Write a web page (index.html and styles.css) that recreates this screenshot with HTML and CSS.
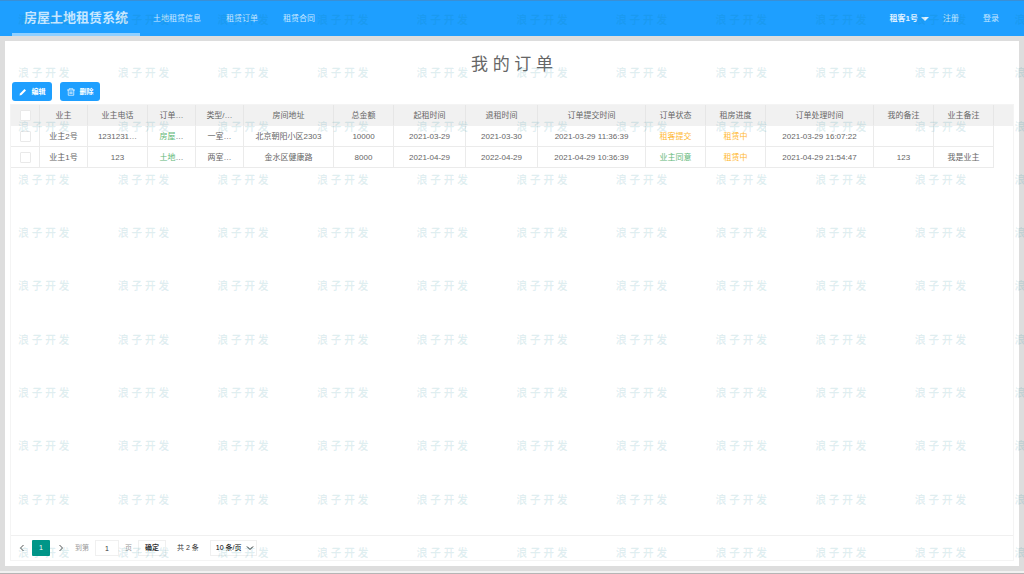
FILE: index.html
```html
<!DOCTYPE html>
<html lang="zh-CN">
<head>
<meta charset="utf-8">
<title>房屋土地租赁系统</title>
<link rel="stylesheet" href="styles.css">
</head>
<body>
<header class="topbar">
  <a class="brand" href="#">房屋土地租赁系统</a>
  <nav class="menu">
    <a href="#">土地租赁信息</a>
    <a href="#">租赁订单</a>
    <a href="#">租赁合同</a>
  </nav>
  <nav class="account">
    <button class="user" type="button">租客1号<span class="caret"></span></button>
    <a href="#">注册</a>
    <a href="#">登录</a>
  </nav>
</header>
<main class="page">
  <section class="card">
    <h1 class="title">我 的 订 单</h1>
    <div class="actions">
      <button class="action" type="button">
        <svg class="icon" viewBox="0 0 16 16" aria-hidden="true"><path fill="currentColor" d="M1 15l1-4 9-9 3 3-9 9z"/></svg>编辑
      </button>
      <button class="action" type="button">
        <svg class="icon" viewBox="0 0 16 16" aria-hidden="true"><path fill="none" stroke="currentColor" stroke-width="1.4" d="M0 4h16M4 4V1.500h8V4M2.500 4v10.500h11V4M6 7v5M8 7v5M10 7v5"/></svg>删除
      </button>
    </div>
    <div class="grid">
      <div class="grid-body">
        <table class="orders">
          <colgroup>
            <col class="w-check"><col class="w-name"><col class="w-mid"><col class="w-name"><col class="w-name"><col class="w-addr"><col class="w-mid"><col class="w-date"><col class="w-date"><col class="w-time"><col class="w-mid"><col class="w-mid"><col class="w-time"><col class="w-mid"><col class="w-mid"><col>
          </colgroup>
          <thead>
            <tr>
              <th><input class="check" type="checkbox" aria-label="全选"></th>
              <th>业主</th><th>业主电话</th><th>订单…</th><th>类型/…</th><th>房间地址</th><th>总金额</th><th>起租时间</th><th>退租时间</th><th>订单提交时间</th><th>订单状态</th><th>租房进度</th><th>订单处理时间</th><th>我的备注</th><th>业主备注</th><th class="rest"></th>
            </tr>
          </thead>
          <tbody>
            <tr>
              <td><input class="check" type="checkbox" aria-label="选择业主2号"></td>
              <td>业主2号</td><td>1231231…</td><td><span class="green">房屋</span>…</td><td>一室…</td><td>北京朝阳小区2303</td><td>10000</td><td>2021-03-29</td><td>2021-03-30</td><td>2021-03-29 11:36:39</td><td class="orange">租客提交</td><td class="orange">租赁中</td><td>2021-03-29 16:07:22</td><td></td><td></td><td class="rest"></td>
            </tr>
            <tr>
              <td><input class="check" type="checkbox" aria-label="选择业主1号"></td>
              <td>业主1号</td><td>123</td><td><span class="green">土地</span>…</td><td>两室…</td><td>金水区健康路</td><td>8000</td><td>2021-04-29</td><td>2022-04-29</td><td>2021-04-29 10:36:39</td><td class="green">业主同意</td><td class="orange">租赁中</td><td>2021-04-29 21:54:47</td><td>123</td><td>我是业主</td><td class="rest"></td>
            </tr>
          </tbody>
        </table>
      </div>
      <footer class="pager">
        <button class="arrow" type="button" aria-label="上一页"><svg class="chevron" viewBox="0 0 8 8" aria-hidden="true"><path d="M5.500 1L2.500 4l3 3"/></svg></button>
        <button class="current" type="button">1</button>
        <button class="arrow" type="button" aria-label="下一页"><svg class="chevron" viewBox="0 0 8 8" aria-hidden="true"><path d="M2.500 1l3 3-3 3"/></svg></button>
        <label class="jump" for="page-no">到第</label>
        <input class="page-no" id="page-no" type="text" value="1">
        <span class="unit">页</span>
        <button class="confirm" type="button">确定</button>
        <span class="total">共 2 条</span>
        <span class="size-box">
          <select class="size" aria-label="每页条数"><option>10 条/页</option><option>20 条/页</option></select>
          <svg class="chevron down" viewBox="0 0 8 8" aria-hidden="true"><path d="M1 2.500l3 3 3-3"/></svg>
        </span>
      </footer>
    </div>
  </section>
</main>
<div class="baseline"></div>
<div class="watermark" aria-hidden="true"><div class="marks" id="marks"></div></div>
<script src="watermark.js"></script>
</body>
</html>
```
FILE: styles.css
```css
* { box-sizing: border-box; }
body {
  margin: 0;
  min-height: 100vh;
  display: flex;
  flex-direction: column;
  position: relative;
  background: #ddd;
  color: #666;
  font-family: "Liberation Sans", "Noto Sans CJK SC", sans-serif;
  font-size: 8px;
  line-height: 12px;
}
a { color: inherit; text-decoration: none; }
button, input, select { font: inherit; color: inherit; margin: 0; padding: 0; border: 0; background: none; }

.topbar {
  display: flex;
  align-items: stretch;
  height: 36px;
  padding: 0 12px;
  border-top: 1px solid #3a8fd6;
  background: #1e9fff;
  color: #c7e7ff;
}
.brand {
  padding: 0 12px;
  border-bottom: 3px solid #8fcfff;
  font-size: 13px;
  font-weight: bold;
  line-height: 34px;
}
.menu { display: flex; align-items: center; gap: 25px; padding-left: 13px; }
.account { display: flex; align-items: center; gap: 24px; margin-left: auto; padding-right: 13px; }
.user { display: flex; align-items: center; gap: 3px; margin-right: -10px; font-weight: bold; color: #e0f2ff; }
.caret { border: 4px solid transparent; border-top-color: #e0f2ff; border-bottom: 0; }

.page { flex: 1; display: flex; padding: 5px; }
.card { flex: 1; min-width: 0; display: flex; flex-direction: column; padding: 12px 5px 5px; background: #fff; }
.title { margin: 0; font-size: 17px; font-weight: normal; line-height: 24px; text-align: center; }
.actions { display: flex; gap: 8px; padding: 5px 2px 3px; }
.action {
  display: flex;
  align-items: center;
  justify-content: center;
  gap: 5px;
  width: 40px;
  height: 19px;
  border-radius: 3px;
  background: #1e9fff;
  color: #fff;
  font-size: 7px;
  font-weight: bold;
}
.icon { width: 8px; height: 8px; }

.grid { flex: 1; display: flex; flex-direction: column; border: 1px solid #f4f4f4; }
.grid-body { flex: 1; }
.orders { width: 100%; table-layout: fixed; border-collapse: separate; border-spacing: 0; }
.w-check { width: 29px; }
.w-name { width: 48px; }
.w-mid { width: 60px; }
.w-addr { width: 90px; }
.w-date { width: 72px; }
.w-time { width: 108px; }
.orders th, .orders td {
  height: 21px;
  padding: 1px 0 0;
  border-right: 1px solid #ebebeb;
  border-bottom: 1px solid #ebebeb;
  font-weight: normal;
  text-align: center;
  white-space: nowrap;
}
.orders th { background: #f1f1f1; border-right-color: #e6e6e6; border-bottom-color: #f1f1f1; }
.orders .rest { border-right: 0; }
.orders td.rest { border-bottom: 0; }
.check {
  appearance: none;
  display: block;
  width: 11px;
  height: 11px;
  margin: 0 auto;
  border: 1px solid #e9e9e9;
  border-radius: 1px;
  background: #fff;
}
.check:checked { background: #009688; }
.green { color: #5fb878; }
.orange { color: #ffb830; }

.pager { display: flex; align-items: center; height: 25px; padding: 0 6px; border-top: 1px solid #f0f0f0; color: #333; font-size: 7px; }
.arrow { display: flex; width: 9px; justify-content: center; }
.chevron { width: 8px; height: 8px; fill: none; stroke: #555; stroke-width: 1; }
.current { width: 18px; height: 16px; margin: 0 6px; border-radius: 1px; background: #009688; color: #fff; }
.jump { margin-left: 10px; color: #999; }
.page-no { width: 24px; height: 16px; margin: 0 6px; border: 1px solid #f0f0f0; text-align: center; }
.unit { color: #999; }
.confirm { width: 28px; height: 16px; margin: 0 11px 0 6px; border: 1px solid #f0f0f0; font-weight: bold; }
.size-box { display: grid; align-items: center; margin-left: 11px; }
.size { grid-area: 1 / 1; appearance: none; width: 47px; height: 16px; padding-left: 5px; border: 1px solid #f0f0f0; color: #000; }
.down { grid-area: 1 / 1; justify-self: end; margin-right: 3px; stroke: #222; pointer-events: none; }

.baseline { height: 3px; border-bottom: 1px solid #b5b5b5; background: #f1f1f1; }

.watermark { position: absolute; inset: 0; overflow: hidden; pointer-events: none; }
.marks {
  position: absolute;
  inset: 11px -42px 14px 18px;
  display: flex;
  flex-direction: column;
  justify-content: space-between;
  color: rgba(0, 120, 140, 0.12);
  font-family: "Noto Sans CJK SC", sans-serif;
  font-size: 11px;
  font-weight: bold;
  line-height: 16px;
}
.mark-row { display: flex; justify-content: space-between; white-space: nowrap; }
```
FILE: watermark.js
```js
const marks = document.getElementById("marks");
for (let r = 0; r < 11; r++) {
  const row = document.createElement("div");
  row.className = "mark-row";
  for (let c = 0; c < 11; c++) {
    const mark = document.createElement("span");
    mark.textContent = "浪 子 开 发";
    row.append(mark);
  }
  marks.append(row);
}
```
